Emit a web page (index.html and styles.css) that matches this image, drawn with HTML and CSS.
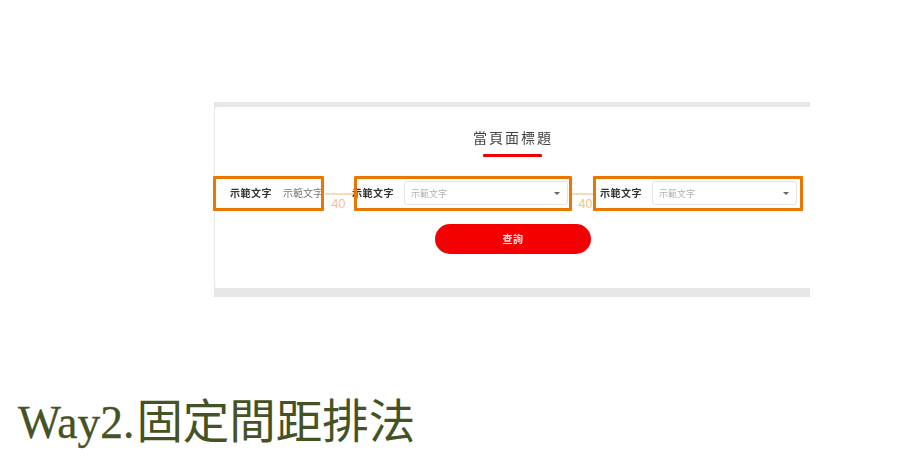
FILE: index.html
```html
<!DOCTYPE html>
<html lang="zh-Hant">
<head>
<meta charset="utf-8">
<title>Way2.固定間距排法</title>
<link rel="stylesheet" href="styles.css">
</head>
<body>
<main class="slide">
  <div class="shot-wrap">
    <section class="shot">
      <div class="card">
        <h2 class="page-title">當頁面標題</h2>
        <div class="title-rule"></div>
        <div class="filters">
          <span class="label">示範文字</span>
          <span class="value">示範文字</span>
          <span class="label label-2">示範文字</span>
          <div class="select select-2"><span>示範文字</span><i class="caret"></i></div>
          <span class="label label-3">示範文字</span>
          <div class="select select-3"><span>示範文字</span><i class="caret"></i></div>
        </div>
        <button class="search" type="button">查詢</button>
      </div>
    </section>
    <div class="mark mark-1"></div>
    <div class="mark mark-2"></div>
    <div class="mark mark-3"></div>
    <div class="gap gap-1"></div>
    <div class="gap gap-2"></div>
    <span class="gap-num num-1">40</span>
    <span class="gap-num num-2">40</span>
  </div>
  <h1 class="way"><span class="way-latin">Way2.</span><span class="way-cjk">固定間距排法</span></h1>
</main>
</body>
</html>
```
FILE: styles.css
```css
* { box-sizing: border-box; }
html, body { margin: 0; background: #fff; }
body { width: 897px; height: 471px; overflow: hidden; font-family: "Noto Sans CJK TC", "Noto Sans", sans-serif; }
.slide { padding-top: 102px; }
.shot-wrap { position: relative; margin-left: 214px; width: 596px; height: 195px; }
.shot { height: 195px; background: #e7e7e7; padding: 5px 0 9px 1px; filter: blur(0.5px); }
.card { height: 181px; background: #fff; display: flex; flex-direction: column; align-items: center; border-radius: 2px 0 0 2px; }
.page-title { margin: 20px 0 0; font-size: 14px; line-height: 20px; font-weight: 400; letter-spacing: 2px; color: #444; text-indent: 1px; }
.title-rule { width: 59px; height: 3px; background: #ee0000; margin-top: 7px; border-radius: 1px; }
.filters { align-self: stretch; display: flex; align-items: center; height: 24px; margin-top: 24px; padding-left: 15px; }
.label { font-size: 10px; line-height: 14px; font-weight: 700; letter-spacing: 0.5px; color: #333; white-space: nowrap; width: 42px; }
.value { font-size: 10px; line-height: 14px; letter-spacing: 0; color: #777; margin-left: 11px; width: 40px; white-space: nowrap; }
.label-2 { margin-left: 29px; }
.label-3 { margin-left: 32px; }
.select { display: flex; align-items: center; justify-content: space-between; height: 24px; margin-left: 10px; padding: 0 7px 0 6px; border: 1px solid #e3e3e3; border-radius: 3px; font-size: 9px; color: #b0b0b0; background: #fff; }
.select-2 { width: 164px; }
.select-3 { width: 145px; }
.caret { width: 0; height: 0; border-left: 3px solid transparent; border-right: 3px solid transparent; border-top: 3px solid #666; }
.search { width: 156px; height: 30px; margin: 19px 0 0 1px; padding: 0 0 2px; border: 0; border-radius: 15px; background: #f50000; color: #fde4e4; font: 700 10px "Noto Sans CJK TC", sans-serif; letter-spacing: 0.5px; }
.mark { position: absolute; top: 74px; height: 35px; border: 3px solid #e97700; border-radius: 1px; }
.mark-1 { left: -1px; width: 111px; }
.mark-2 { left: 140px; width: 218px; }
.mark-3 { left: 379px; width: 210px; }
.gap { position: absolute; top: 91px; height: 2px; background: #fdd9b5; }
.gap-1 { left: 111px; width: 28px; }
.gap-2 { left: 358px; width: 21px; }
.gap-num { position: absolute; top: 94px; font: 12.5px/16px "Liberation Sans", sans-serif; color: #fbbd85; }
.num-1 { left: 117.5px; }
.num-2 { left: 364.5px; }
.way { margin: 93px 0 0 18px; font-weight: 400; font-size: 46.5px; line-height: 56px; color: #455324; white-space: nowrap; }
.way-latin { font-family: "Liberation Serif", serif; font-size: 45.5px; -webkit-text-stroke: 0.3px #455324; }
.way-cjk { font-family: "Noto Sans CJK TC", sans-serif; font-weight: 400; margin-left: 2px; }
```
